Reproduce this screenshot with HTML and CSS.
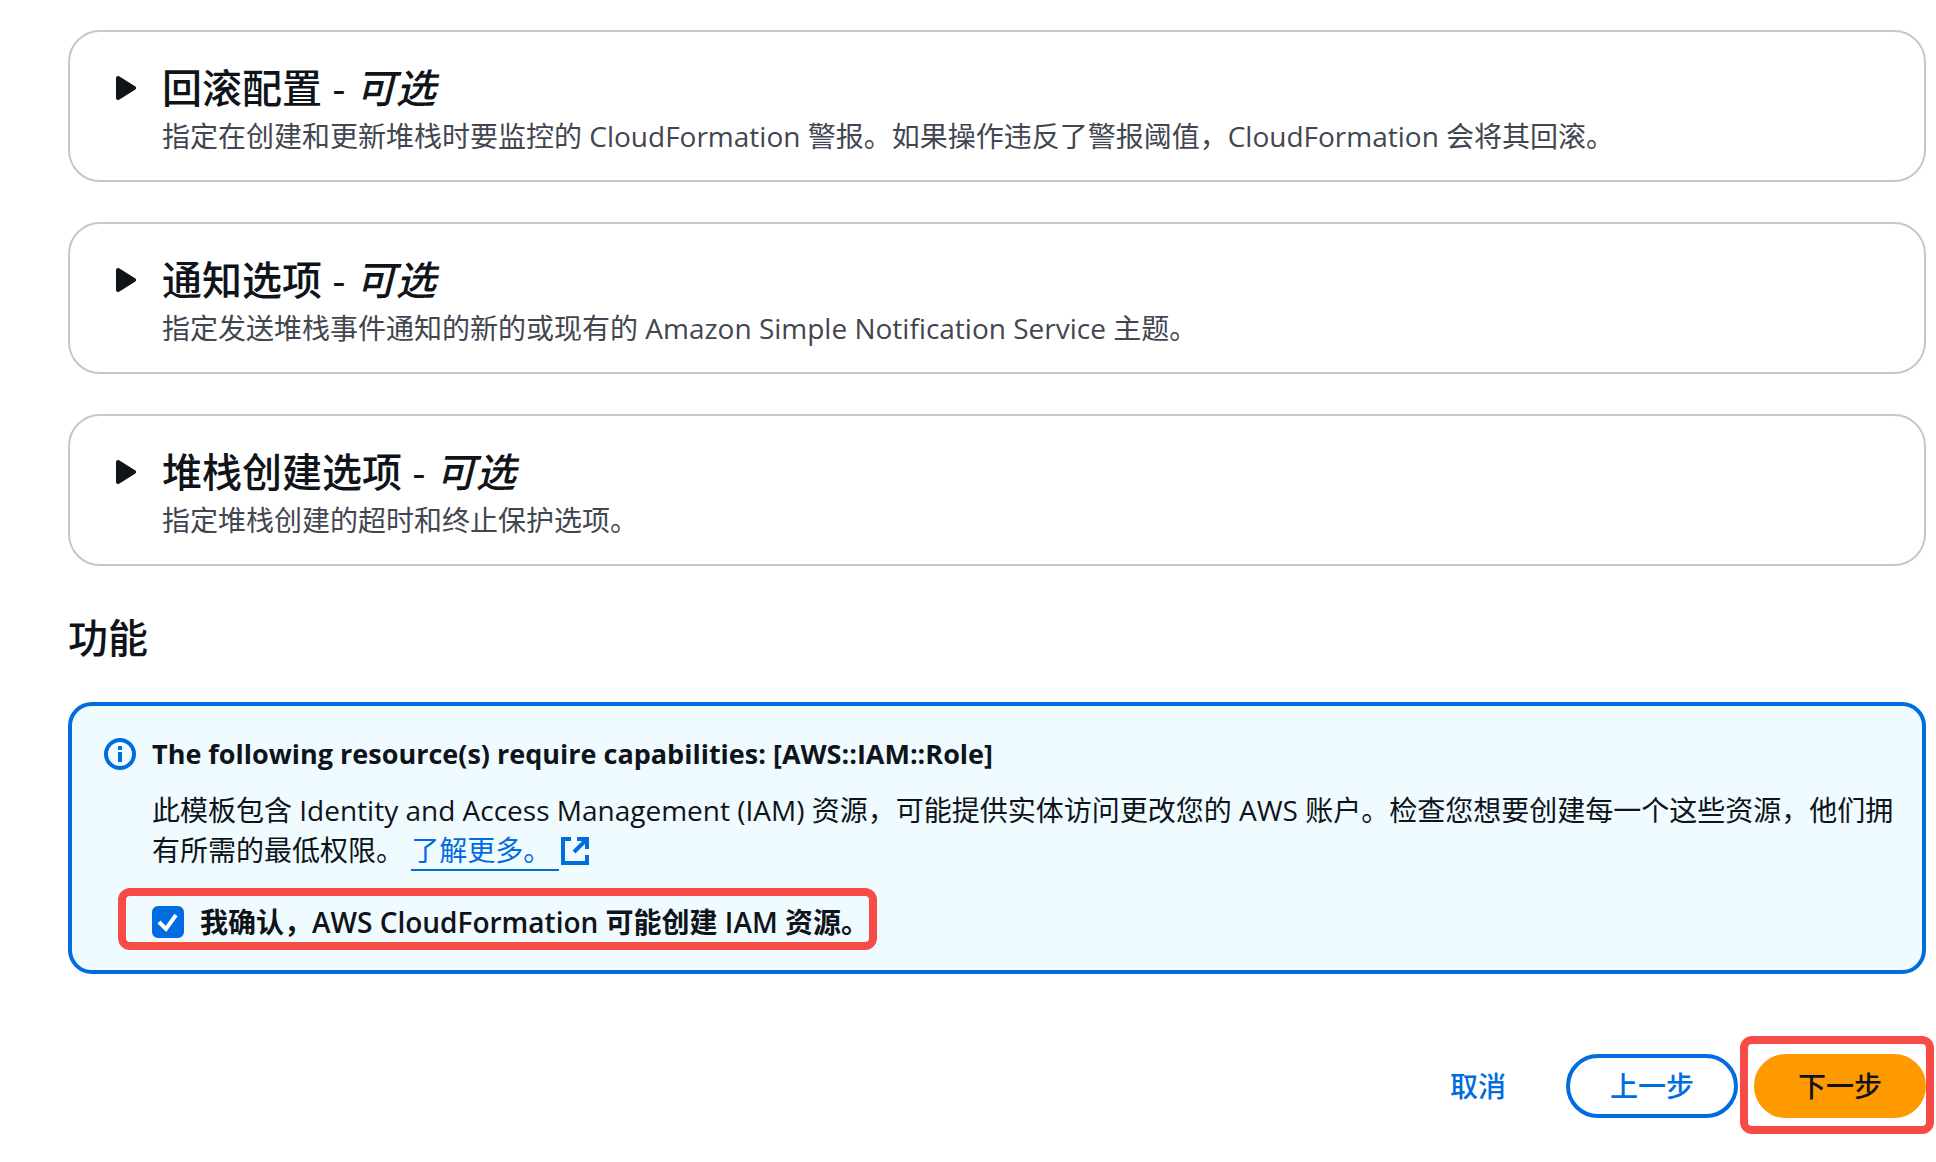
FILE: index.html
```html
<!DOCTYPE html>
<html lang="zh-CN">
<head>
    <meta charset="UTF-8">
    <meta name="viewport" content="width=device-width, initial-scale=1.0">
    <title>配置堆栈选项</title>
    <link rel="stylesheet" href="styles.css">
</head>
<body>
    <main class="content">
        <div class="sections">
            <details class="card">
                <summary class="card-header">
                    <svg class="caret" viewBox="0 0 20 24" aria-hidden="true"><path d="M2 2 18 12 2 22Z"/></svg>
                    <div>
                        <h2>回滚配置 - <em>可选</em></h2>
                        <p class="description">指定在创建和更新堆栈时要监控的 CloudFormation 警报。如果操作违反了警报阈值，CloudFormation 会将其回滚。</p>
                    </div>
                </summary>
            </details>
            <details class="card">
                <summary class="card-header">
                    <svg class="caret" viewBox="0 0 20 24" aria-hidden="true"><path d="M2 2 18 12 2 22Z"/></svg>
                    <div>
                        <h2>通知选项 - <em>可选</em></h2>
                        <p class="description">指定发送堆栈事件通知的新的或现有的 Amazon Simple Notification Service 主题。</p>
                    </div>
                </summary>
            </details>
            <details class="card">
                <summary class="card-header">
                    <svg class="caret" viewBox="0 0 20 24" aria-hidden="true"><path d="M2 2 18 12 2 22Z"/></svg>
                    <div>
                        <h2>堆栈创建选项 - <em>可选</em></h2>
                        <p class="description">指定堆栈创建的超时和终止保护选项。</p>
                    </div>
                </summary>
            </details>
        </div>

        <h2 class="section-title">功能</h2>

        <div class="alert">
            <svg class="info-icon" viewBox="0 0 32 32" aria-hidden="true">
                <circle cx="16" cy="16" r="14"/>
                <path d="M16 14v10M16 8v4"/>
            </svg>
            <div class="alert-body">
                <h3>The following resource(s) require capabilities: [AWS::IAM::Role]</h3>
                <p>此模板包含 Identity and Access Management (IAM) 资源，可能提供实体访问更改您的 AWS 账户。检查您想要创建每一个这些资源，他们拥有所需的最低权限。 <a class="link" href="#"><span class="link-text">了解更多。&nbsp;</span><svg class="external-icon" viewBox="0 0 28 28" aria-hidden="true"><path d="M10 2H2v24h24v-8M16 2h10v10M26 2 13 15"/></svg></a></p>
                <label class="acknowledge">
                    <input type="checkbox" class="checkbox" checked>
                    <span>我确认，AWS CloudFormation 可能创建 IAM 资源。</span>
                </label>
            </div>
        </div>

        <div class="actions">
            <button type="button" class="button button-link">取消</button>
            <button type="button" class="button button-normal">上一步</button>
            <button type="button" class="button button-primary">下一步</button>
        </div>
    </main>
</body>
</html>
```
FILE: styles.css
```css
* {
    box-sizing: border-box;
}
body {
    margin: 0;
    background-color: #fff;
    color: #0f141a;
    font-family: "Open Sans", "Noto Sans CJK SC", sans-serif;
    font-size: 28px;
    line-height: 40px;
}
h2, h3, p {
    margin: 0;
}
h2 {
    font-size: 40px;
    font-weight: 500;
    line-height: 48px;
}
.content {
    padding: 30px 10px 44px 68px;
}
.sections {
    display: grid;
    gap: 40px;
}
.card {
    border: 2px solid #c6c6cd;
    border-radius: 32px;
}
.card-header {
    display: flex;
    gap: 26px;
    padding: 32px 46px 24px;
    cursor: pointer;
    list-style: none;
}
.caret {
    flex: none;
    width: 20px;
    height: 24px;
    margin-top: 12px;
    fill: #0f141a;
    stroke: #0f141a;
    stroke-width: 4;
    stroke-linejoin: round;
}
.description {
    margin-top: 4px;
    color: #424650;
}
.section-title {
    margin: 48px 0 40px;
}

/* Capabilities alert */
.alert {
    display: flex;
    gap: 16px;
    padding: 28px 24px 28px 32px;
    background-color: #f0fbff;
    border: 4px solid #006ce0;
    border-radius: 24px;
}
.info-icon {
    flex: none;
    width: 32px;
    height: 32px;
    margin-top: 4px;
    fill: none;
    stroke: #006ce0;
    stroke-width: 4;
}
.alert h3 {
    font-size: 27px;
    font-weight: 700;
    margin-bottom: 16px;
}
.link {
    color: #006ce0;
    text-decoration: none;
}
.link-text {
    border-bottom: 2px solid #006ce0;
}
.external-icon {
    width: 28px;
    height: 28px;
    margin-left: 2px;
    vertical-align: -4px;
    fill: none;
    stroke: #006ce0;
    stroke-width: 4;
}
.acknowledge {
    position: relative;
    display: flex;
    align-items: center;
    gap: 16px;
    width: fit-content;
    margin-top: 32px;
    font-weight: 600;
    cursor: pointer;
}
.checkbox {
    appearance: none;
    width: 32px;
    height: 32px;
    margin: 0;
    border: 2px solid #8c8c94;
    border-radius: 6px;
    background-color: #fff;
}
.checkbox:checked {
    border-color: #006ce0;
    background: #006ce0 url("data:image/svg+xml,%3Csvg xmlns='http://www.w3.org/2000/svg' viewBox='0 0 28 28'%3E%3Cpath d='M5 14l7 7L22 7' fill='none' stroke='white' stroke-width='4'/%3E%3C/svg%3E") center / 28px no-repeat;
}

/* Red frames around the two controls to click */
.acknowledge::after,
.button-primary::after {
    content: "";
    position: absolute;
    border: 8px solid #f74b48;
    border-radius: 12px;
    pointer-events: none;
}
.acknowledge::after {
    inset: -14px -8px -8px -34px;
}
.button-primary::after {
    inset: -22px -12px -20px -18px;
}

.actions {
    display: flex;
    justify-content: flex-end;
    gap: 16px;
    margin-top: 80px;
}
.button {
    position: relative;
    height: 64px;
    padding: 0 40px;
    border: 4px solid transparent;
    border-radius: 32px;
    background: none;
    color: #006ce0;
    font: inherit;
    font-weight: 500;
    cursor: pointer;
}
.button-normal {
    border-color: #006ce0;
}
.button-primary {
    border-color: #ff9900;
    background-color: #ff9900;
    color: #0f141a;
}
```
